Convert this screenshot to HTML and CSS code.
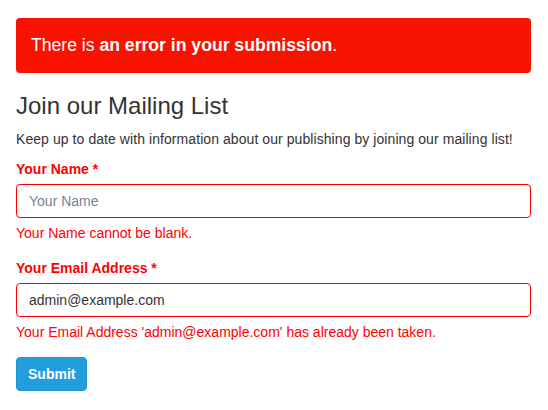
FILE: index.html
```html
<!DOCTYPE html>
<html>
<head>
<meta charset="utf-8">
<link rel="stylesheet" href="styles.css">
</head>
<body>
<div class="container">
  <div class="alert">There is <strong>an error in your submission</strong>.</div>
  <h2 class="title">Join our Mailing List</h2>
  <p class="intro">Keep up to date with information about our publishing by joining our mailing list!</p>
  <form class="form">
    <div class="form-group">
      <label class="label">Your Name *</label>
      <input class="input" type="text" placeholder="Your Name">
      <div class="help">Your Name cannot be blank.</div>
    </div>
    <div class="form-group">
      <label class="label">Your Email Address *</label>
      <input class="input" type="text" value="admin@example.com">
      <div class="help">Your Email Address 'admin@example.com' has already been taken.</div>
    </div>
    <button class="btn" type="button">Submit</button>
  </form>
</div>
</body>
</html>
```

FILE: styles.css
```css
html, body {
  margin: 0;
  padding: 0;
  background: #fff;
}
body {
  font-family: "Liberation Sans", Arial, sans-serif;
  font-size: 14px;
  line-height: 20px;
  color: #333;
}
.container {
  padding: 18px 17px 0 16px;
}
.alert {
  background: #f81300;
  color: #fff;
  border-radius: 4px;
  padding: 15px 15px;
  font-size: 17.6px;
  line-height: 25px;
  margin-bottom: 20px;
}
.alert strong {
  font-weight: bold;
}
.title {
  font-size: 24px;
  font-weight: normal;
  line-height: 26.4px;
  margin: 0 0 10px;
  color: #333;
}
.intro {
  margin: 0 0 10px;
  letter-spacing: 0.07px;
}
.form-group {
  margin-bottom: 15px;
}
.label {
  display: block;
  font-weight: bold;
  color: #ff0000;
  margin-bottom: 5px;
}
.input {
  display: block;
  box-sizing: border-box;
  width: 100%;
  height: 34px;
  padding: 6px 12px;
  font-family: "Liberation Sans", Arial, sans-serif;
  font-size: 14px;
  color: #333;
  border: 1px solid #ff0000;
  border-radius: 4px;
  background: #fff;
  outline: none;
  margin: 0;
}
.input::placeholder {
  color: #7a8394;
}
.help {
  color: #ff0000;
  margin-top: 5px;
  margin-bottom: 10px;
}
.btn {
  display: inline-block;
  height: 34px;
  padding: 0 11px;
  font-family: "Liberation Sans", Arial, sans-serif;
  font-size: 14px;
  font-weight: bold;
  color: #fff;
  background: #229ede;
  border: 1px solid #1f93cf;
  border-radius: 4px;
  margin: 0;
}
```
